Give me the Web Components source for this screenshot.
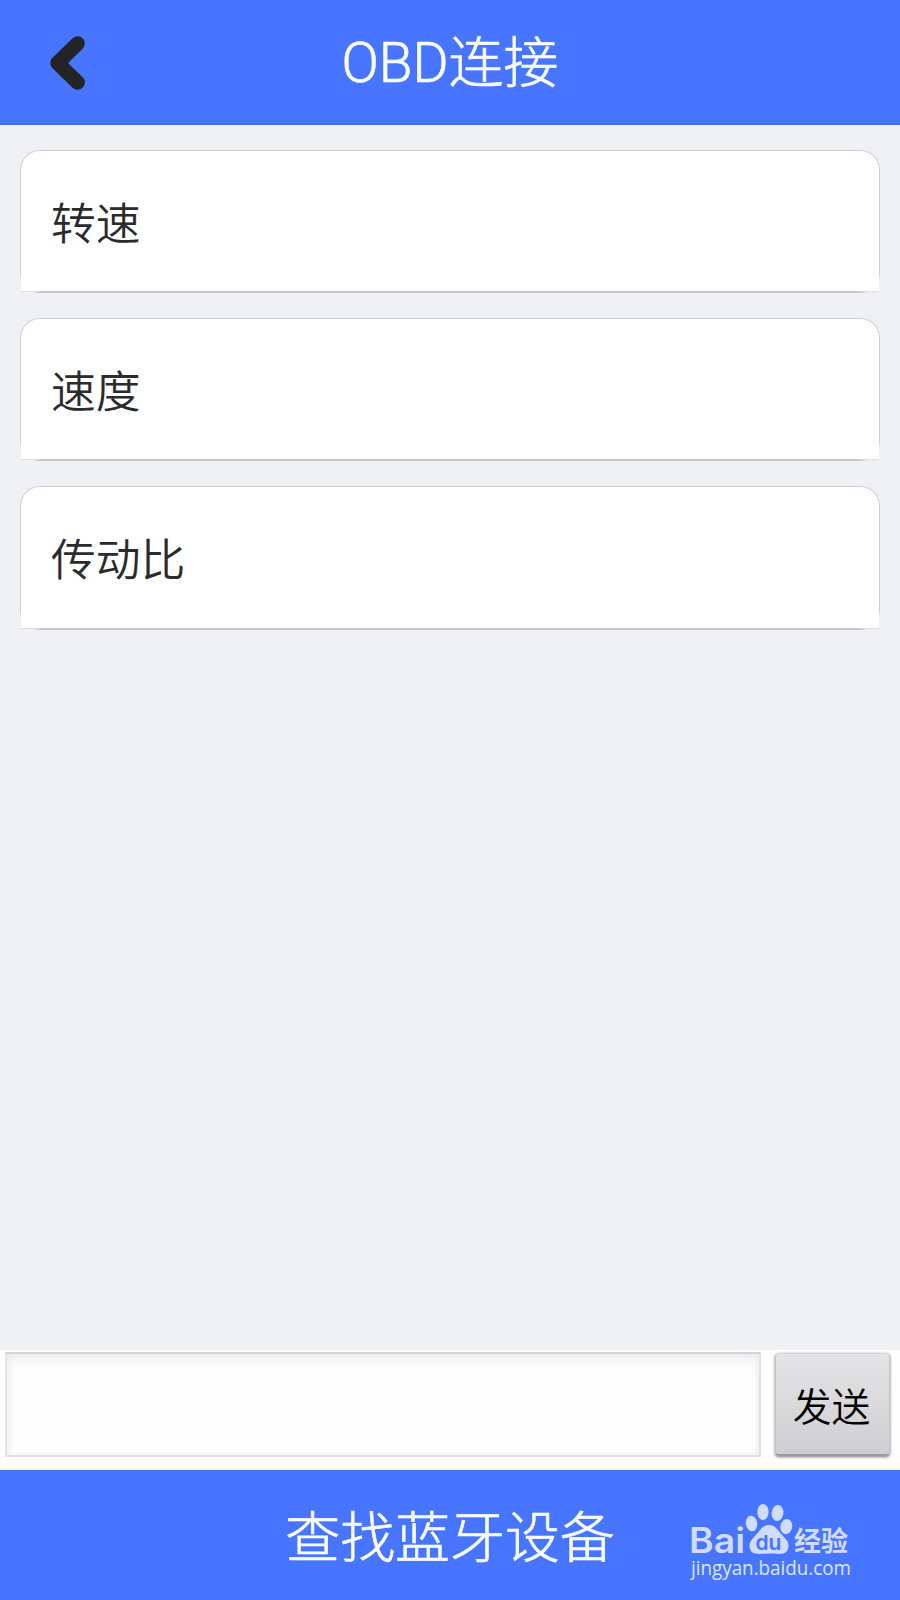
<!DOCTYPE html>
<html lang="zh-CN">
<head>
<meta charset="UTF-8">
<title>OBD连接</title>
<style>
  body {
    margin: 0;
    font-family: Roboto, 'Noto Sans CJK SC', sans-serif;
  }
</style>
</head>
<body>
<obd-screen>
  <obd-header slot="header">OBD连接</obd-header>
  <obd-card>转速</obd-card>
  <obd-card>速度</obd-card>
  <obd-card>传动比</obd-card>
  <obd-send-bar slot="send">发送</obd-send-bar>
  <obd-footer slot="footer">查找蓝牙设备<baidu-mark slot="mark"></baidu-mark></obd-footer>
</obd-screen>

<script>
class ObdScreen extends HTMLElement {
  connectedCallback() {
    this.attachShadow({ mode: 'open' });
    this.shadowRoot.innerHTML = `
      <style>
        :host {
          display: flex;
          flex-direction: column;
          height: 1600px;
          background: #eff1f5;
          overflow: hidden;
        }
        main {
          flex: 1;
          display: flex;
          flex-direction: column;
          gap: 25px;
          padding: 25px 20px;
        }
      </style>
      <slot name="header"></slot>
      <main><slot></slot></main>
      <slot name="send"></slot>
      <slot name="footer"></slot>
    `;
  }
}
customElements.define('obd-screen', ObdScreen);

class ObdHeader extends HTMLElement {
  connectedCallback() {
    this.attachShadow({ mode: 'open' });
    this.shadowRoot.innerHTML = `
      <style>
        :host {
          display: grid;
          grid-template-columns: 136px 1fr 136px;
          align-items: center;
          height: 125px;
          box-sizing: border-box;
          border-bottom: 1px solid #4472e6;
          background: linear-gradient(#4775ff 120px, #4470f2 120px, #4470f2 121px, #4673fc 121px);
          color: #f8fcff;
        }
        svg {
          display: block;
          margin-left: 46px;
        }
        h1 {
          margin: 0;
          padding-top: 2px;
          font-size: 55px;
          font-weight: 300;
          line-height: 80px;
          text-align: center;
          -webkit-text-stroke: 0.7px #f8fcff;
        }
      </style>
      <svg width="44" height="60" viewBox="0 0 44 60" fill="none" stroke="#242426" stroke-width="14.5" stroke-linecap="round" stroke-linejoin="round">
        <path d="M31.6 11.5 L11.5 31 L31.6 50.5"/>
        <path d="M12 31 L17 31" stroke-width="11"/>
      </svg>
      <h1><slot></slot></h1>
    `;
  }
}
customElements.define('obd-header', ObdHeader);

class ObdCard extends HTMLElement {
  connectedCallback() {
    this.attachShadow({ mode: 'open' });
    this.shadowRoot.innerHTML = `
      <style>
        :host {
          display: flex;
          align-items: center;
          box-sizing: border-box;
          height: 143.2px;
          padding: 8px 30px 0;
          border: 1px solid #cbced3;
          border-bottom: 2px solid #c5c8cc;
          border-radius: 20px;
          background: #fff;
          color: #2b2b2d;
          font-size: 44.8px;
          font-weight: 350;
          line-height: 64px;
          position: relative;
        }
        /* the lower corners are filled in square */
        :host::before, :host::after {
          content: '';
          position: absolute;
          bottom: -1px;
          width: 19px;
          height: 17px;
          background: #fff;
          border-bottom: 1px solid #dcdee1;
          box-sizing: border-box;
        }
        :host::before { left: 0; }
        :host::after { right: 0; }
      </style>
      <slot></slot>
    `;
  }
}
customElements.define('obd-card', ObdCard);

class ObdSendBar extends HTMLElement {
  connectedCallback() {
    this.attachShadow({ mode: 'open' });
    this.shadowRoot.innerHTML = `
      <style>
        :host {
          display: flex;
          gap: 14px;
          height: 120px;
          box-sizing: border-box;
          padding: 2px 10px 13px 5px;
          background: #fefefe;
        }
        input {
          flex: 1;
          min-width: 0;
          padding: 0 12px;
          border: 2px solid #e2e1e4;
          border-top-color: #d3d5d5;
          border-radius: 0;
          outline: none;
          background: #fefefe;
          box-shadow: inset 0 9px 14px -5px #e9e9eb, inset 3px 0 8px -3px #ececf0, inset -3px 0 8px -3px #ececf0;
          font: inherit;
          font-size: 38px;
        }
        button {
          width: 115px;
          height: 103px;
          margin-top: 1px;
          padding: 7px 2px 0 0;
          border: 1px solid #c5c5c7;
          border-top-color: #d4d4d6;
          border-bottom: 2px solid #9b9b9e;
          border-radius: 4px;
          background: linear-gradient(#e4e4e6, #cfced2);
          box-shadow: 0 1px 3px #77777a;
          color: #050505;
          font: inherit;
          font-size: 38.8px;
          font-weight: 350;
          line-height: 56px;
        }
      </style>
      <input type="text">
      <button><slot></slot></button>
    `;
  }
}
customElements.define('obd-send-bar', ObdSendBar);

class ObdFooter extends HTMLElement {
  connectedCallback() {
    this.attachShadow({ mode: 'open' });
    this.shadowRoot.innerHTML = `
      <style>
        :host {
          display: flex;
          align-items: center;
          justify-content: center;
          position: relative;
          height: 130px;
          box-sizing: border-box;
          padding-top: 5px;
          border-top: 1px solid #4670dc;
          background: #4775ff;
          color: #f8fcff;
          font-size: 54.9px;
          font-weight: 300;
          line-height: 80px;
          -webkit-text-stroke: 0.7px #f8fcff;
        }
        .mark {
          position: absolute;
          right: 44px;
          bottom: 16px;
        }
      </style>
      <slot></slot>
      <div class="mark"><slot name="mark"></slot></div>
    `;
  }
}
customElements.define('obd-footer', ObdFooter);

class BaiduMark extends HTMLElement {
  connectedCallback() {
    this.attachShadow({ mode: 'open' });
    this.shadowRoot.innerHTML = `
      <style>
        :host {
          display: block;
          -webkit-text-stroke: 0;
        }
        svg { display: block; }
      </style>
      <svg width="166" height="84" viewBox="0 0 166 84" fill="#cfdcff">
        <text x="-1" y="53" font-family="Inter" font-weight="600" font-size="35" textLength="56" lengthAdjust="spacingAndGlyphs">Bai</text>
        <ellipse cx="61.5" cy="23.5" rx="5.7" ry="7.8" transform="rotate(-8 61.5 23.5)"/>
        <ellipse cx="73" cy="12" rx="5.6" ry="8"/>
        <ellipse cx="87.5" cy="13" rx="5.9" ry="8" transform="rotate(8 87.5 13)"/>
        <ellipse cx="96.3" cy="26.6" rx="5.9" ry="7.6" transform="rotate(8 96.3 26.6)"/>
        <path d="M79 25 C86 25 88 31 93 36 C98 41 99.500 44 98 49 C96 55 90 54 79 53.500 C68 54 62 55 60 49 C58.500 44 60 41 65 36 C70 31 72 25 79 25 Z"/>
        <text x="65.500" y="50" fill="#4775ff" font-family="Inter" font-weight="600" font-size="20.500" textLength="26" lengthAdjust="spacingAndGlyphs">du</text>
        <text x="104" y="51" font-family="Noto Sans CJK SC" font-weight="700" font-size="27" textLength="54" lengthAdjust="spacingAndGlyphs">经验</text>
        <text x="1" y="74.500" fill="#dde6ff" font-family="Open Sans" font-weight="400" font-size="19.500" textLength="160" lengthAdjust="spacingAndGlyphs">jingyan.baidu.com</text>
      </svg>
    `;
  }
}
customElements.define('baidu-mark', BaiduMark);
</script>
</body>
</html>
